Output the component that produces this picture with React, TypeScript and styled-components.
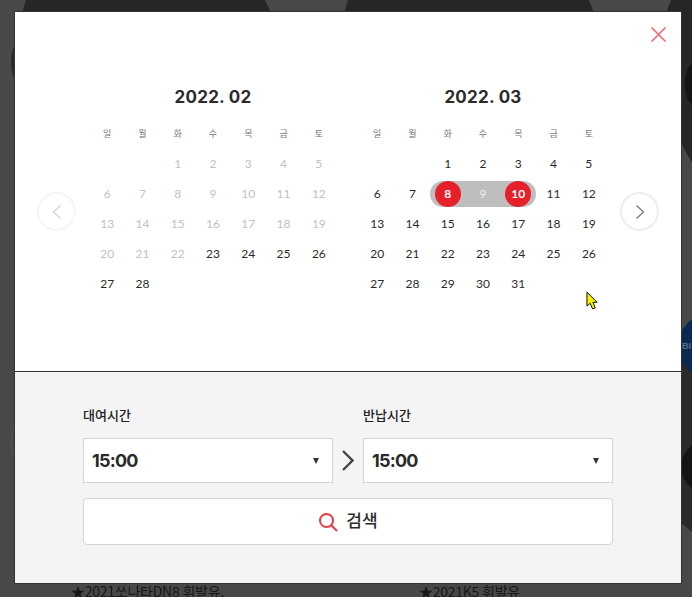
import * as React from "react";
import styled, { createGlobalStyle } from "styled-components";

const GlobalStyle = createGlobalStyle`
  html, body {
    margin: 0;
    padding: 0;
    height: 100%;
    overflow: hidden;
    background: #484848;
  }
`;

const WEEK = ["일", "월", "화", "수", "목", "금", "토"];

type DayState = "off" | "on" | "edge" | "mid";

type MonthData = {
  title: string;
  lead: number;
  days: number;
  state: (d: number) => DayState;
};

const MONTHS: MonthData[] = [
  { title: "2022. 02", lead: 2, days: 28, state: (d) => (d < 23 ? "off" : "on") },
  {
    title: "2022. 03",
    lead: 2,
    days: 31,
    state: (d) => (d === 8 || d === 10 ? "edge" : d === 9 ? "mid" : "on"),
  },
];

export default function App() {
  return (
    <Page>
      <GlobalStyle />
      <Backdrop viewBox="0 0 692 597" aria-hidden="true">
        <path d="M26 0H265L271 13H22Z" fill="#262626" />
        <path d="M348 0H589L594 13H344Z" fill="#262626" />
        <path d="M671 0H692V163L681 143V13H666Z" fill="#262626" />
        <path d="M681 340L692 330V532L681 523Z" fill="#2a2a2a" />
        <ellipse cx="30" cy="62" rx="19" ry="30" fill="#2a2a2a" />
        <ellipse cx="40" cy="443" rx="29" ry="30" fill="none" stroke="#555" />
        <ellipse cx="694" cy="84" rx="9" ry="21" fill="#141414" />
        <ellipse cx="712" cy="467" rx="31" ry="28" fill="#141414" />
        <circle cx="710" cy="346" r="32" fill="#0a2a52" />
        <text x="682" y="349" fontFamily="Liberation Sans" fontWeight="700" fontSize="9" fill="#5f6c80">
          BI
        </text>
      </Backdrop>
      <BehindText $left={71}>★2021쏘나타DN8 휘발유,</BehindText>
      <BehindText $left={419}>★2021K5 휘발유</BehindText>
      <Modal>
        <Top>
          <CloseButton>
            <svg width="15" height="15" viewBox="0 0 15 15">
              <path d="M0.5 0.5L14.500 14.500M14.500 0.5L0.5 14.500" stroke="#f0636b" strokeWidth="1.5" fill="none" />
            </svg>
          </CloseButton>
          <NavButton $side="left" $faded>
            <Chevron points="8.500,0.5 1.500,7 8.500,13.500" />
          </NavButton>
          <Months>
            {MONTHS.map((m) => (
              <Month key={m.title}>
                <MonthTitle>{m.title}</MonthTitle>
                <Grid>
                  {WEEK.map((w) => (
                    <WeekDay key={w}>{w}</WeekDay>
                  ))}
                  {Array.from({ length: m.lead }).map((_, i) => (
                    <span key={i} />
                  ))}
                  {Array.from({ length: m.days }).map((_, i) => {
                    const d = i + 1;
                    const state = m.state(d);
                    return (
                      <Day key={d} $state={state} $start={d === 8} $end={d === 10}>
                        <DayNum $state={state}>{d}</DayNum>
                      </Day>
                    );
                  })}
                </Grid>
              </Month>
            ))}
          </Months>
          <NavButton $side="right">
            <Chevron points="1.500,0.5 8.500,7 1.500,13.500" />
          </NavButton>
        </Top>
        <Bottom>
          <Times>
            <TimeField>
              <TimeLabel>대여시간</TimeLabel>
              <Select>
                15:00
                <Caret />
              </Select>
            </TimeField>
            <Arrow>
              <svg width="12" height="21" viewBox="0 0 12 21">
                <path d="M1 1L10.500 10.500L1 20" stroke="#444" strokeWidth="2.4" fill="none" />
              </svg>
            </Arrow>
            <TimeField>
              <TimeLabel>반납시간</TimeLabel>
              <Select>
                15:00
                <Caret />
              </Select>
            </TimeField>
          </Times>
          <SearchButton>
            <svg width="20" height="20" viewBox="0 0 20 20">
              <circle cx="8.500" cy="8.500" r="6.500" stroke="#ea3a42" strokeWidth="2" fill="none" />
              <path d="M13 13L19 19" stroke="#ea3a42" strokeWidth="2" fill="none" />
            </svg>
            <SearchLabel>검색</SearchLabel>
          </SearchButton>
        </Bottom>
      </Modal>
      <Cursor viewBox="0 0 14 20" aria-hidden="true">
        <path d="M1 1V16L4.500 13L7 19L10 18L7.500 12H12Z" fill="#f6ee00" stroke="#000" strokeWidth="1" />
      </Cursor>
    </Page>
  );
}

const Chevron = ({ points }: { points: string }) => (
  <svg width="10" height="14" viewBox="0 0 10 14">
    <polyline points={points} stroke="currentColor" strokeWidth="1.3" fill="none" />
  </svg>
);

const Page = styled.div`
  position: relative;
  width: 692px;
  height: 597px;
  overflow: hidden;
  padding: 12px 11px 14px 15px;
  box-sizing: border-box;
`;

const Backdrop = styled.svg`
  position: absolute;
  inset: 0;
  width: 692px;
  height: 597px;
`;

const BehindText = styled.div<{ $left: number }>`
  position: absolute;
  top: 582px;
  left: ${(p) => p.$left}px;
  font: 14px "Noto Sans CJK KR", sans-serif;
  letter-spacing: -0.25px;
  color: #161616;
  line-height: 18px;
`;

const Modal = styled.div`
  position: relative;
  width: 666px;
  height: 571px;
  display: flex;
  flex-direction: column;
  background: #fff;
  box-shadow: 0 0 0 1px #333;
`;

const Top = styled.div`
  position: relative;
  height: 360px;
  box-sizing: border-box;
  border-bottom: 1px solid #333;
  display: flex;
  justify-content: center;
`;

const CloseButton = styled.div`
  position: absolute;
  top: 15px;
  right: 15px;
  width: 15px;
  height: 15px;
  display: flex;
`;

const NavButton = styled.div<{ $side: "left" | "right"; $faded?: boolean }>`
  position: absolute;
  top: 180px;
  ${(p) => (p.$side === "left" ? "left: 22px;" : "right: 22px;")}
  width: 39px;
  height: 39px;
  box-sizing: border-box;
  border-radius: 50%;
  border: 2px solid ${(p) => (p.$faded ? "#f6f6f6" : "#eeeeee")};
  color: ${(p) => (p.$faded ? "#d4d4d4" : "#777")};
  display: flex;
  align-items: center;
  justify-content: center;
`;

const Months = styled.div`
  display: flex;
  gap: 23px;
  padding-top: 72px;
`;

const Month = styled.div`
  width: 247px;
`;

const MonthTitle = styled.div`
  font: 700 17px/26px Inter, sans-serif;
  letter-spacing: 0.25px;
  color: #2b2b2b;
  text-align: center;
  height: 26px;
`;

const Grid = styled.div`
  display: grid;
  grid-template-columns: repeat(7, 1fr);
  grid-auto-rows: 30px;
  margin-top: 9px;
`;

const WeekDay = styled.div`
  font: 9px/30px "Noto Sans CJK KR", sans-serif;
  color: #777;
  text-align: center;
`;

const Day = styled.div<{ $state: DayState; $start?: boolean; $end?: boolean }>`
  display: flex;
  align-items: center;
  justify-content: center;
  ${(p) =>
    p.$state === "edge" || p.$state === "mid"
      ? `
    background: #bebebe;
    height: 26px;
    align-self: center;
  `
      : ""}
  ${(p) => (p.$start ? "border-radius: 13px 0 0 13px;" : "")}
  ${(p) => (p.$end ? "border-radius: 0 13px 13px 0;" : "")}
`;

const DayNum = styled.span<{ $state: DayState }>`
  width: 26px;
  height: 26px;
  border-radius: 50%;
  display: flex;
  align-items: center;
  justify-content: center;
  font: ${(p) => (p.$state === "edge" ? 700 : 400)} 12px/26px Lato, sans-serif;
  color: ${(p) =>
    p.$state === "off" ? "#c2c2c2" : p.$state === "on" ? "#2a2a2a" : p.$state === "mid" ? "#f2f2f2" : "#fff"};
  background: ${(p) => (p.$state === "edge" ? "#e5202a" : "transparent")};
`;

const Bottom = styled.div`
  flex: 1;
  background: #f4f4f4;
  padding: 34px 68px 0;
`;

const Times = styled.div`
  display: flex;
  align-items: flex-end;
`;

const TimeField = styled.div`
  width: 250px;
`;

const TimeLabel = styled.div`
  font: 500 13px/18px "Noto Sans CJK KR", sans-serif;
  color: #222;
  margin-bottom: 14px;
`;

const Select = styled.div`
  height: 45px;
  box-sizing: border-box;
  border: 1px solid #d4d4d4;
  background: #fff;
  padding: 0 11px 0 8px;
  display: flex;
  align-items: center;
  justify-content: space-between;
  font: 700 18px Inter, sans-serif;
  letter-spacing: -0.8px;
  color: #2b2b2b;
`;

const Caret = styled.span`
  width: 0;
  height: 0;
  border-left: 3.5px solid transparent;
  border-right: 3.5px solid transparent;
  border-top: 6px solid #333;
  margin-right: 2px;
`;

const Arrow = styled.div`
  width: 30px;
  height: 45px;
  display: flex;
  align-items: center;
  justify-content: center;
`;

const SearchButton = styled.div`
  margin-top: 15px;
  height: 47px;
  box-sizing: border-box;
  border: 1px solid #d4d4d4;
  border-radius: 4px;
  background: #fff;
  display: flex;
  align-items: center;
  justify-content: center;
  gap: 8px;
`;

const SearchLabel = styled.span`
  font: 500 17px/24px "Noto Sans CJK KR", sans-serif;
  color: #2b2b2b;
  padding-bottom: 4px;
`;

const Cursor = styled.svg`
  position: absolute;
  left: 586px;
  top: 291px;
  width: 13px;
  height: 19px;
`;
